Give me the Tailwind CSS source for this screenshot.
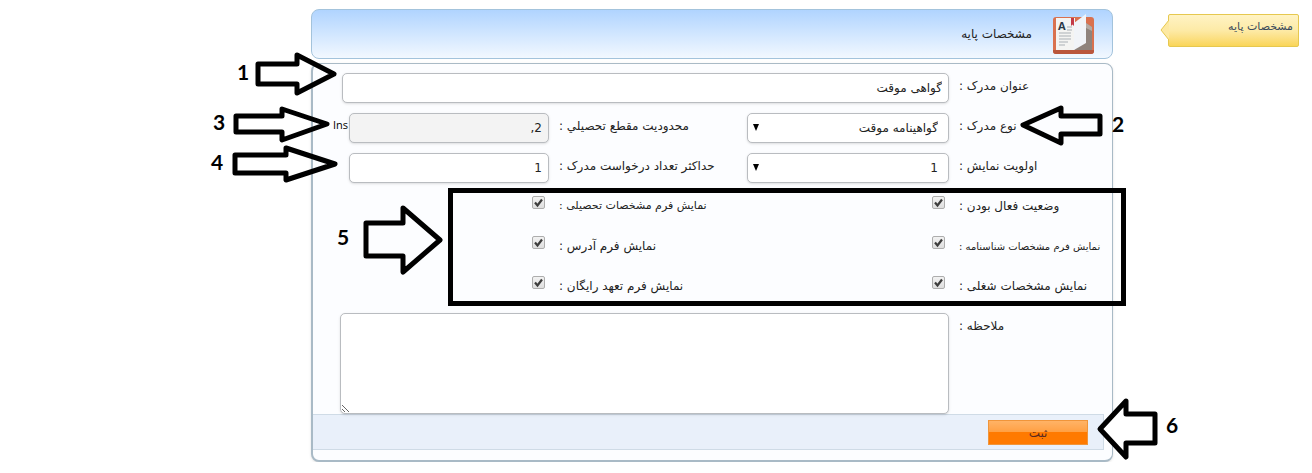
<!DOCTYPE html>
<html lang="fa" dir="rtl">
<head>
    <meta charset="UTF-8">
    <meta name="viewport" content="width=device-width, initial-scale=1.0">
    <title>مشخصات پایه</title>
    <script src="https://cdn.jsdelivr.net/npm/@tailwindcss/browser@4"></script>
</head>
<body class="relative bg-white font-['DejaVu_Sans','Noto_Sans',sans-serif] text-[12px] text-[#222]">
    <div class="flex items-start gap-[55px] pt-[9px] pr-[13px] pl-[311px]">
        <!-- side tab -->
        <aside class="relative order-first mt-[5px] w-[131px] shrink-0">
            <a href="#" class="block h-[33px] rounded-xs border border-[#e6c84f] bg-linear-to-b from-[#fff3c4] via-[#fdeaa6] to-[#fad557] px-[5px] pt-1 text-[11px] text-[#3a4a5c]">مشخصات پایه</a>
            <svg class="absolute top-[6px] -left-2" width="9" height="20" viewBox="0 0 9 20">
                <path d="M9 0 L1 10 L9 20" fill="#fde9a2" stroke="#e6c84f" />
            </svg>
        </aside>

        <main class="min-w-0 flex-1">
            <header class="flex h-[50px] items-center gap-5 rounded-lg border border-[#a3c3dc] bg-linear-to-b from-[#b0d4ff] to-[#f2f8ff] pr-[17px]">
                <svg width="43" height="42" viewBox="0 0 43 42">
                    <rect x="1" y="4" width="41" height="37" rx="3" fill="#d9714f" />
                    <path d="M1 37h41v1a3 3 0 0 1-3 3H4a3 3 0 0 1-3-3z" fill="#b9563c" />
                    <path d="M4 5h19v32H4z" fill="#f4f4f2" />
                    <path d="M22 37L34 10l6 4v23z" fill="#8f837c" />
                    <path d="M34 10l6 4v4l-6-3z" fill="#b5aaa3" />
                    <path d="M22 37V10L34 1v29z" fill="#f1f4f8" />
                    <path d="M19 5h3v8l-1.500-1.500L19 13z" fill="#c33a46" />
                    <text x="6" y="17" direction="ltr" font-family="Open Sans" font-weight="700" font-size="11" fill="#2b3947">A</text>
                    <path d="M15 14h5M15 17h5M7 20h12M7 23h12M7 26h12M7 29h9M7 32h6" stroke="#aab0b5" fill="none" />
                </svg>
                <h1>مشخصات پایه</h1>
            </header>

            <form class="mt-1 rounded-lg border border-b-2 border-l-2 border-[#a9bac6] bg-[#fcfdff] pt-1 pb-[10px] shadow-sm">
                <div class="grid auto-rows-[40px] grid-cols-[163px_202fr_198px_200fr] items-center pl-9">
                    <label for="title" class="pb-1 pl-[10px] text-left">عنوان مدرک :</label>
                    <input id="title" type="text" value="گواهی موقت" class="col-span-3 -ml-[7px] h-[30px] rounded-[5px] border border-[#b9bcc0] bg-white px-[6px] shadow-sm">

                    <label for="kind" class="pb-1 pl-[10px] text-left">نوع مدرک :</label>
                    <div class="relative">
                        <select id="kind" class="h-[30px] w-full appearance-none rounded-[5px] border border-[#b9bcc0] bg-white px-[10px] shadow-sm">
                            <option>گواهینامه موقت</option>
                        </select>
                        <svg class="pointer-events-none absolute top-[11px] left-[6px]" width="6" height="7" viewBox="0 0 6 7"><path d="M0 0h6L3 7z" /></svg>
                    </div>
                    <label for="level" class="pb-1 pl-[10px] text-left">محدودیت مقطع تحصیلي :</label>
                    <div class="relative">
                        <input id="level" type="text" value="2," readonly class="h-[30px] w-full rounded-[5px] border border-[#b9bcc0] bg-[#f3f3f3] px-[6px] shadow-sm">
                        <span class="absolute top-1 right-full pr-px font-['Open_Sans',sans-serif] text-[11px] text-black">Ins</span>
                    </div>

                    <label for="order" class="pb-1 pl-[10px] text-left">اولویت نمایش :</label>
                    <div class="relative">
                        <select id="order" class="h-[30px] w-full appearance-none rounded-[5px] border border-[#b9bcc0] bg-white px-[10px] shadow-sm">
                            <option>1</option>
                        </select>
                        <svg class="pointer-events-none absolute top-[11px] left-[6px]" width="6" height="7" viewBox="0 0 6 7"><path d="M0 0h6L3 7z" /></svg>
                    </div>
                    <label for="max" class="pb-1 pl-[10px] text-left">حداکثر تعداد درخواست مدرک :</label>
                    <input id="max" type="text" value="1" class="h-[30px] w-full rounded-[5px] border border-[#b9bcc0] bg-white px-[6px] shadow-sm">

                    <label for="active" class="pb-1 pl-[10px] text-left">وضعیت فعال بودن :</label>
                    <div class="grid justify-start pr-1 pb-3">
                        <input id="active" type="checkbox" checked class="peer col-start-1 row-start-1 size-[13px] appearance-none rounded-xs border border-[#adadad] bg-linear-to-b from-[#f2f2f2] to-[#dedede]">
                        <svg class="pointer-events-none invisible col-start-1 row-start-1 peer-checked:visible" width="13" height="13" viewBox="0 0 13 13"><path d="M3 6.500l2.500 3L10 3.500" fill="none" stroke="#3c3c3c" stroke-width="2.200" /></svg>
                    </div>
                    <label for="edu" class="pb-1 pl-[10px] text-left text-[11px]">نمایش فرم مشخصات تحصیلی :</label>
                    <div class="grid justify-start pr-1 pb-3">
                        <input id="edu" type="checkbox" checked class="peer col-start-1 row-start-1 size-[13px] appearance-none rounded-xs border border-[#adadad] bg-linear-to-b from-[#f2f2f2] to-[#dedede]">
                        <svg class="pointer-events-none invisible col-start-1 row-start-1 peer-checked:visible" width="13" height="13" viewBox="0 0 13 13"><path d="M3 6.500l2.500 3L10 3.500" fill="none" stroke="#3c3c3c" stroke-width="2.200" /></svg>
                    </div>

                    <label for="idcard" class="pb-1 pl-[10px] text-left text-[10px]">نمایش فرم مشخصات شناسنامه :</label>
                    <div class="grid justify-start pr-1 pb-3">
                        <input id="idcard" type="checkbox" checked class="peer col-start-1 row-start-1 size-[13px] appearance-none rounded-xs border border-[#adadad] bg-linear-to-b from-[#f2f2f2] to-[#dedede]">
                        <svg class="pointer-events-none invisible col-start-1 row-start-1 peer-checked:visible" width="13" height="13" viewBox="0 0 13 13"><path d="M3 6.500l2.500 3L10 3.500" fill="none" stroke="#3c3c3c" stroke-width="2.200" /></svg>
                    </div>
                    <label for="address" class="pb-1 pl-[10px] text-left">نمایش فرم آدرس :</label>
                    <div class="grid justify-start pr-1 pb-3">
                        <input id="address" type="checkbox" checked class="peer col-start-1 row-start-1 size-[13px] appearance-none rounded-xs border border-[#adadad] bg-linear-to-b from-[#f2f2f2] to-[#dedede]">
                        <svg class="pointer-events-none invisible col-start-1 row-start-1 peer-checked:visible" width="13" height="13" viewBox="0 0 13 13"><path d="M3 6.500l2.500 3L10 3.500" fill="none" stroke="#3c3c3c" stroke-width="2.200" /></svg>
                    </div>

                    <label for="job" class="pb-1 pl-[10px] text-left">نمایش مشخصات شغلی :</label>
                    <div class="grid justify-start pr-1 pb-3">
                        <input id="job" type="checkbox" checked class="peer col-start-1 row-start-1 size-[13px] appearance-none rounded-xs border border-[#adadad] bg-linear-to-b from-[#f2f2f2] to-[#dedede]">
                        <svg class="pointer-events-none invisible col-start-1 row-start-1 peer-checked:visible" width="13" height="13" viewBox="0 0 13 13"><path d="M3 6.500l2.500 3L10 3.500" fill="none" stroke="#3c3c3c" stroke-width="2.200" /></svg>
                    </div>
                    <label for="free" class="pb-1 pl-[10px] text-left">نمایش فرم تعهد رایگان :</label>
                    <div class="grid justify-start pr-1 pb-3">
                        <input id="free" type="checkbox" checked class="peer col-start-1 row-start-1 size-[13px] appearance-none rounded-xs border border-[#adadad] bg-linear-to-b from-[#f2f2f2] to-[#dedede]">
                        <svg class="pointer-events-none invisible col-start-1 row-start-1 peer-checked:visible" width="13" height="13" viewBox="0 0 13 13"><path d="M3 6.500l2.500 3L10 3.500" fill="none" stroke="#3c3c3c" stroke-width="2.200" /></svg>
                    </div>
                </div>

                <div class="grid grid-cols-[163px_1fr] pt-[5px] pl-[27px]">
                    <label for="note" class="pt-1 pl-[10px] text-left">ملاحظه :</label>
                    <textarea id="note" class="block h-[101px] w-full resize rounded-[5px] border border-[#b9bcc0] bg-white p-1 shadow-sm"></textarea>
                </div>
                <div class="mr-2 flex h-9 items-center border-y border-r border-[#cfdbe6] bg-[#e9f0fa] pr-[15px]">
                    <button type="submit" class="h-[25px] w-[100px] border border-[#f0953a] bg-linear-to-b from-[#ffb366] from-0% via-[#ff9f40] via-50% to-[#ff7a00] to-50% pt-0.5 text-[#5a2a20]">ثبت</button>
                </div>
            </form>
        </main>
    </div>

    <!-- numbered callouts -->
    <svg class="pointer-events-none absolute top-0 left-0" width="1312" height="473" viewBox="0 0 1312 473">
        <g fill="none" stroke="#000" stroke-width="5" stroke-linejoin="round">
            <path d="M258 64h39v-9l37 19-37 19v-9h-39z" />
            <path d="M236 116h46v-7l45 15-45 16v-8h-46z" />
            <path d="M235 155h51v-7l49 16-49 16v-7h-51z" />
            <path d="M1100 116h-39v-8l-38 17 38 18v-9h39z" />
            <path d="M366 223h37v-15l37 32-37 32v-16h-37z" />
            <path d="M1155 414h-29v-13l-26 28 26 28v-14h29z" fill="#fff" />
            <path d="M450.500 190.500h673v113h-673z" stroke-linejoin="miter" />
        </g>
        <g direction="ltr" font-family="Lato" font-weight="700" font-size="21" fill="#000">
            <text x="237" y="80">1</text>
            <text x="213" y="130">3</text>
            <text x="211" y="170">4</text>
            <text x="1112" y="132">2</text>
            <text x="337" y="245">5</text>
            <text x="1166" y="433">6</text>
        </g>
    </svg>
</body>
</html>
